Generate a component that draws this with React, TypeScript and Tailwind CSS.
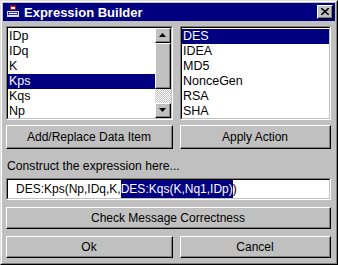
import React from "react";

const dataItems = ["IDp", "IDq", "K", "Kps", "Kqs", "Np"];
const actions = ["DES", "IDEA", "MD5", "NonceGen", "RSA", "SHA"];

function RaisedButton({ label, className }: { label: string; className: string }) {
    return (
        <div className={`border border-t-white border-l-white border-r-black border-b-black ${className}`}>
            <div className="h-full flex items-center justify-center border-r border-b border-r-[#808080] border-b-[#808080] text-[12px] text-black">
                {label}
            </div>
        </div>
    );
}

function Sunken({ children, className }: { children: React.ReactNode; className: string }) {
    return (
        <div className={`border border-t-[#808080] border-l-[#808080] border-r-white border-b-white ${className}`}>
            <div className="h-full border border-t-black border-l-black border-r-[#c0c0c0] border-b-[#c0c0c0] bg-white overflow-hidden">
                {children}
            </div>
        </div>
    );
}

function ListRow({ text, selected }: { text: string; selected: boolean }) {
    return (
        <div className={`h-[15px] leading-[15px] pl-[1px] text-[12.5px] ${selected ? "bg-[#000080] text-white" : "text-black"}`}>
            {text}
        </div>
    );
}

function ScrollBtn({ up }: { up: boolean }) {
    return (
        <div className="h-[15px] border border-t-white border-l-white border-r-black border-b-black bg-[#c0c0c0]">
            <div className="h-full flex items-center justify-center border-r border-b border-r-[#808080] border-b-[#808080]">
                <svg width="7" height="4" viewBox="0 0 7 4">
                    {up ? <polygon points="3.5,0 7,4 0,4" fill="#000" /> : <polygon points="0,0 7,0 3.5,4" fill="#000" />}
                </svg>
            </div>
        </div>
    );
}

function TitleIcon() {
    return (
        <svg width="16" height="16" viewBox="0 0 16 16">
            <path d="M5 3 Q6.5 0.5 8 3 Q9.5 0.5 11 3" stroke="#d00000" strokeWidth="1.3" fill="none" />
            <rect x="5.5" y="2.5" width="5" height="3" fill="#fff" stroke="#d00000" strokeWidth="0.8" />
            <rect x="1.5" y="6.5" width="13" height="7" fill="#dfdfdf" stroke="#000080" strokeWidth="1" />
            <rect x="3.5" y="8.5" width="9" height="2" fill="#fff" stroke="#000080" strokeWidth="0.8" />
            <rect x="2" y="13" width="12" height="2" fill="#000080" />
        </svg>
    );
}

export default function App() {
    return (
        <div className="w-[338px] h-[265px] bg-[#c0c0c0] border border-t-[#dfdfdf] border-l-[#dfdfdf] border-r-black border-b-black font-['Liberation_Sans',Arial,sans-serif] overflow-hidden">
            <div className="h-full border border-t-white border-l-white border-r-[#808080] border-b-[#808080] p-[1px] flex flex-col">
                {/* title bar */}
                <div className="h-[18px] bg-[#000080] flex items-center pl-[2px] pr-[2px]">
                    <TitleIcon />
                    <span className="ml-[3px] text-white font-bold text-[13px] leading-none">Expression Builder</span>
                    <div className="ml-auto w-[16px] h-[14px] border border-t-white border-l-white border-r-black border-b-black bg-[#c0c0c0]">
                        <div className="h-full flex items-center justify-center border-r border-b border-r-[#808080] border-b-[#808080]">
                            <svg width="8" height="7" viewBox="0 0 8 7">
                                <path d="M0 0 L8 7 M8 0 L0 7" stroke="#000" strokeWidth="1.6" />
                            </svg>
                        </div>
                    </div>
                </div>

                <div className="pl-[3px] flex flex-col">
                    {/* lists */}
                    <div className="mt-[5px] flex gap-[7px]">
                        <Sunken className="w-[167px] h-[94px]">
                            <div className="flex h-full">
                                <div className="flex-1 pt-[1px]">
                                    {dataItems.map((d) => (
                                        <ListRow key={d} text={d} selected={d === "Kps"} />
                                    ))}
                                </div>
                                <div className="w-[16px] flex flex-col">
                                    <ScrollBtn up />
                                    <div className="h-[46px] border border-t-white border-l-white border-r-black border-b-black bg-[#c0c0c0]">
                                        <div className="h-full border-r border-b border-r-[#808080] border-b-[#808080]" />
                                    </div>
                                    <div className="flex-1 bg-[image:repeating-conic-gradient(#c0c0c0_0_25%,#ffffff_0_50%)] bg-[length:2px_2px]" />
                                    <ScrollBtn up={false} />
                                </div>
                            </div>
                        </Sunken>
                        <Sunken className="w-[151px] h-[94px]">
                            <div className="pt-[1px]">
                                {actions.map((a) => (
                                    <ListRow key={a} text={a} selected={a === "DES"} />
                                ))}
                            </div>
                        </Sunken>
                    </div>

                    {/* action buttons */}
                    <div className="mt-[5px] flex gap-[7px]">
                        <RaisedButton label="Add/Replace Data Item" className="w-[167px] h-[24px]" />
                        <RaisedButton label="Apply Action" className="w-[151px] h-[24px]" />
                    </div>

                    <div className="mt-[10px] h-[15px] leading-[15px] text-[12.2px] text-black pl-[1px]">Construct the expression here...</div>

                    <Sunken className="mt-[4px] w-[325px] h-[22px]">
                        <div className="h-full flex items-center pl-[8px] text-[12px] text-black whitespace-nowrap">
                            <span>DES:Kps(Np,IDq,K,</span>
                            <span className="bg-[#000080] text-white">DES:Kqs(K,Nq1,IDp)</span>
                            <span>)</span>
                        </div>
                    </Sunken>

                    <RaisedButton label="Check Message Correctness" className="mt-[7px] w-[325px] h-[22px]" />

                    <div className="mt-[7px] flex gap-[7px]">
                        <RaisedButton label="Ok" className="w-[167px] h-[22px]" />
                        <RaisedButton label="Cancel" className="w-[151px] h-[22px]" />
                    </div>
                </div>
            </div>
        </div>
    );
}
